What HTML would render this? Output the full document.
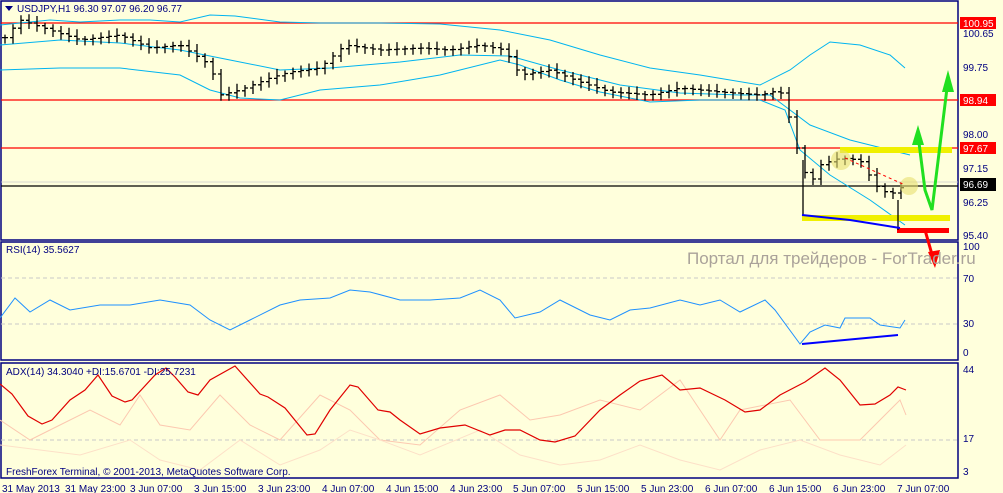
<!DOCTYPE html><html><head><style>body{margin:0;background:#ffffdc;}svg{display:block;font-family:"Liberation Sans",sans-serif;}</style></head><body>
<svg id="s" width="1003" height="493" viewBox="0 0 1003 493">
<rect width="1003" height="493" fill="#ffffdc"/>
<g fill="none" stroke="#000080" stroke-width="1.5">
<rect x="1" y="1" width="957" height="239"/>
<rect x="1" y="242" width="957" height="118"/>
<rect x="1" y="363" width="957" height="115"/>
</g>
<g stroke-width="1.2">
<line x1="1" y1="23" x2="958" y2="23" stroke="#f00"/>
<line x1="1" y1="100" x2="958" y2="100" stroke="#f00"/>
<line x1="1" y1="148" x2="958" y2="148" stroke="#f00"/>
<line x1="1" y1="186" x2="958" y2="186" stroke="#000"/>
<line x1="1" y1="182" x2="958" y2="182" stroke="#ccc" stroke-width="0.8"/>
</g>
<g fill="none" stroke="#00b4f0" stroke-width="1">
<polyline points="0,25 50,20 80,22 120,20 150,20 180,22 210,15 235,16 280,22 320,23 380,23 440,24 500,30 550,40 600,55 650,68 700,75 760,85 790,70 810,55 830,42 860,45 890,55 905,68"/>
<polyline points="0,45 60,40 120,43 180,50 230,60 280,70 330,68 400,62 460,55 510,56 560,70 620,85 680,93 740,95 770,95 790,110 810,125 850,140 890,150 910,155"/>
<polyline points="0,70 60,68 120,68 180,75 210,90 240,98 280,100 320,90 380,85 440,75 500,60 520,65 560,80 600,92 650,102 700,100 760,100 785,110 800,150 830,175 870,200 905,225"/>
</g>
<g id="bars" fill="none" stroke="#000" stroke-width="1.3"></g>
<rect x="840" y="147" width="112" height="6" fill="#f0f000"/>
<rect x="802" y="215" width="148" height="6" fill="#f0f000"/>
<rect x="897" y="228" width="52" height="5" fill="#f00"/>
<line x1="803" y1="160" x2="803" y2="215" stroke="#000" stroke-width="1.3"/>
<line x1="898" y1="200" x2="898" y2="230" stroke="#000" stroke-width="1.3"/>
<polyline points="802,215 850,220 900,228" fill="none" stroke="#00f" stroke-width="2"/>
<circle cx="841" cy="160" r="10" fill="#e8e070" opacity="0.6"/>
<circle cx="909" cy="186" r="9" fill="#e8e070" opacity="0.6"/>
<line x1="845" y1="158" x2="905" y2="185" stroke="#f00" stroke-dasharray="3,3"/>
<polyline points="918,135 925,190 932,210 948,80" fill="none" stroke="#20e020" stroke-width="3"/>
<polygon points="948,70 942,92 954,92" fill="#20e020"/>
<polygon points="918,125 912,145 924,145" fill="#20e020"/>
<line x1="925" y1="230" x2="933" y2="258" stroke="#f00" stroke-width="3"/>
<polygon points="935,268 928,252 940,250" fill="#f00"/>
<g font-size="10" fill="#000080">
<text x="963" y="37">100.65</text><text x="963" y="71">99.75</text><text x="963" y="138">98.00</text>
<text x="963" y="172">97.15</text><text x="963" y="206">96.25</text><text x="963" y="239">95.40</text>
</g>
<rect x="960" y="17" width="36" height="12" fill="#f00"/><text x="963" y="27" font-size="10" fill="#fff">100.95</text>
<rect x="960" y="94" width="36" height="12" fill="#f00"/><text x="963" y="104" font-size="10" fill="#fff">98.94</text>
<rect x="960" y="142" width="36" height="12" fill="#f00"/><text x="963" y="152" font-size="10" fill="#fff">97.67</text>
<rect x="960" y="178" width="36" height="13" fill="#000"/><text x="963" y="188" font-size="10" fill="#fff">96.69</text>
<polygon points="5,6 13,6 9,11" fill="#000080"/>
<text x="17" y="12" font-size="10" fill="#000080">USDJPY,H1  96.30 97.07 96.20 96.77</text>
<text x="687" y="264" font-size="17" fill="#aaa29a">Портал для трейдеров - ForTrader.ru</text>
<g stroke="#c8c8c8" stroke-dasharray="4,3"><line x1="1" y1="278" x2="958" y2="278"/><line x1="1" y1="324" x2="958" y2="324"/></g>
<polyline fill="none" stroke="#1e90ff" stroke-width="1" points="0,318 15,298 30,312 50,300 70,310 100,305 130,305 160,300 190,305 210,320 230,330 250,320 280,305 300,300 330,298 350,290 370,292 400,300 430,300 460,298 480,290 500,300 515,318 540,312 560,300 590,315 610,320 630,310 650,308 680,300 700,305 720,300 740,312 765,300 775,310 800,344 810,332 825,325 840,328 845,318 870,318 880,325 900,328 905,320"/>
<line x1="802" y1="344" x2="898" y2="335" stroke="#0000ff" stroke-width="2"/>
<text x="6" y="253" font-size="10" fill="#000080">RSI(14) 35.5627</text>
<g font-size="10" fill="#000080"><text x="963" y="250">100</text><text x="963" y="282">70</text><text x="963" y="327">30</text><text x="963" y="356">0</text>
<text x="963" y="373">44</text><text x="963" y="442">17</text><text x="963" y="475">3</text></g>
<line x1="1" y1="440" x2="958" y2="440" stroke="#c8c8c8" stroke-dasharray="4,3"/>
<polyline fill="none" stroke="#fcc8b0" stroke-width="1" points="0,420 30,440 60,425 90,410 120,425 140,395 160,425 190,430 220,395 250,425 280,440 320,395 350,410 380,440 420,445 460,410 500,395 530,420 560,415 600,400 640,410 680,380 720,440 740,410 790,400 820,440 860,440 900,400 906,415"/>
<polyline fill="none" stroke="#fde0c8" stroke-width="1" points="0,445 40,450 80,455 130,440 160,460 200,470 240,440 280,465 320,450 350,430 380,440 420,455 480,430 520,455 560,465 600,460 640,445 680,460 720,470 760,450 800,440 840,455 880,465 906,445"/>
<polyline fill="none" stroke="#e00000" stroke-width="1.2" points="0,384 12,394 28,416 42,424 52,420 70,400 85,390 98,375 112,396 125,402 132,400 155,375 166,368 175,377 188,392 198,395 210,380 235,366 260,394 268,397 285,408 307,435 315,434 330,410 350,385 358,387 378,410 390,412 400,420 420,434 440,428 465,425 490,435 505,430 520,430 540,440 555,442 575,436 600,410 620,395 640,381 662,375 680,390 700,388 725,400 745,412 760,410 780,395 805,382 825,368 840,380 860,405 875,404 890,395 898,387 906,390"/>
<text x="6" y="375" font-size="10" fill="#000080">ADX(14) 34.3040 +DI:15.6701 -DI:25.7231</text>
<text x="6" y="475" font-size="10" fill="#000080">FreshForex Terminal, © 2001-2013, MetaQuotes Software Corp.</text>
<g font-size="10" fill="#000080">
<text x="2" y="492">31 May 2013</text><text x="65" y="492">31 May 23:00</text><text x="130" y="492">3 Jun 07:00</text>
<text x="194" y="492">3 Jun 15:00</text><text x="258" y="492">3 Jun 23:00</text><text x="322" y="492">4 Jun 07:00</text>
<text x="386" y="492">4 Jun 15:00</text><text x="450" y="492">4 Jun 23:00</text><text x="513" y="492">5 Jun 07:00</text>
<text x="577" y="492">5 Jun 15:00</text><text x="641" y="492">5 Jun 23:00</text><text x="705" y="492">6 Jun 07:00</text>
<text x="769" y="492">6 Jun 15:00</text><text x="833" y="492">6 Jun 23:00</text><text x="897" y="492">7 Jun 07:00</text>
</g>
</svg>
<script>
var P=[[3,40],[20,20],[50,30],[80,40],[120,35],[150,48],[180,45],[210,65],[220,95],[240,90],[270,78],[290,72],[320,68],[345,45],[380,50],[420,48],[450,50],[480,45],[505,50],[520,75],[550,70],[580,82],[610,92],[650,95],[680,88],[720,92],[760,95],[780,90],[790,120],[800,160],[810,185],[820,165],[840,158],[860,160],[875,185],[890,195],[905,185]];
function yAt(x){for(var i=0;i<P.length-1;i++){if(x>=P[i][0]&&x<=P[i+1][0]){var t=(x-P[i][0])/(P[i+1][0]-P[i][0]);return P[i][1]+t*(P[i+1][1]-P[i][1]);}}return P[P.length-1][1];}
var d="",prev=yAt(5);
for(var x=5;x<=907;x+=8){var y=yAt(x);var o=prev,c=y;var hi=Math.min(o,c)-3-(x*7%5),lo=Math.max(o,c)+3+(x*3%4);
d+="M"+x+","+hi.toFixed(1)+"V"+lo.toFixed(1)+"M"+(x-3)+","+o.toFixed(1)+"H"+x+"M"+x+","+c.toFixed(1)+"H"+(x+3);prev=y;}
var p=document.createElementNS("http://www.w3.org/2000/svg","path");p.setAttribute("d",d);document.getElementById("bars").appendChild(p);
</script>
</body></html>
